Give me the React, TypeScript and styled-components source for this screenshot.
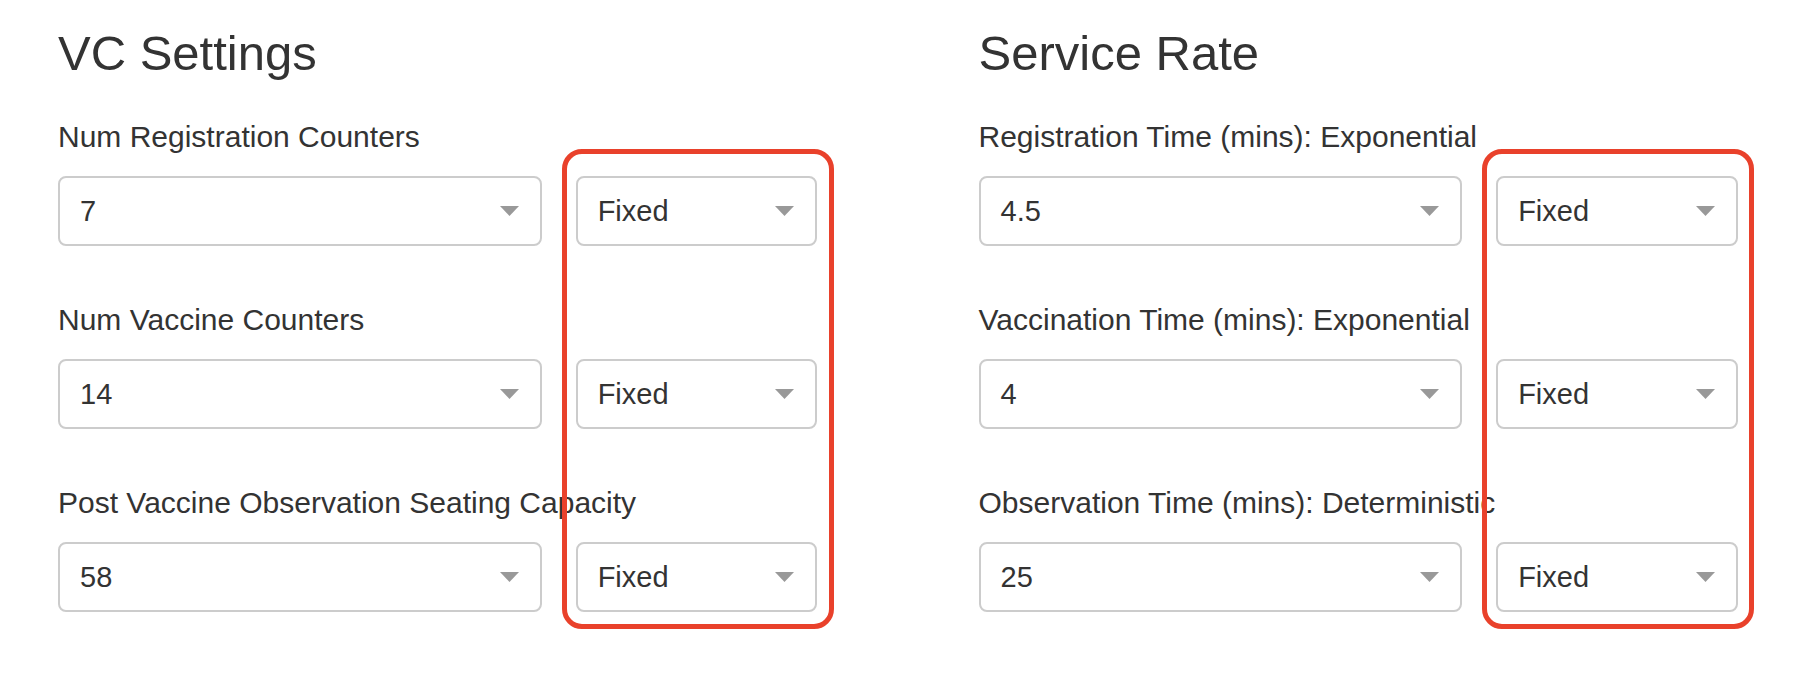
import * as React from "react";
import styled, { createGlobalStyle } from "styled-components";

const GlobalStyle = createGlobalStyle`
    html, body {
        margin: 0;
        padding: 0;
        background: #fff;
    }
    * {
        box-sizing: border-box;
    }
    body {
        font-family: "Liberation Sans", Arial, sans-serif;
        color: #333;
    }
`

const Page = styled.div`
    display: grid;
    grid-template-columns: 1fr 1fr;
    column-gap: 161px;
    padding: 0 58px;
    width: 1796px;
    height: 676px;
`

const Column = styled.section`
    display: flex;
    flex-direction: column;
`

const Heading = styled.h3`
    margin: 27px 0 0;
    font-size: 49px;
    line-height: 52px;
    font-weight: 500;
    color: #333;
`

const Fields = styled.div`
    position: relative;
    display: flex;
    flex-direction: column;
    gap: 56px;
    margin-top: 40px;
`

const Field = styled.div`
    display: flex;
    flex-direction: column;
`

const Label = styled.label`
    display: block;
    font-size: 30px;
    line-height: 35px;
    margin-bottom: 22px;
    color: #333;
    white-space: nowrap;
`

const SelectRow = styled.div`
    display: grid;
    grid-template-columns: 2fr 1fr;
    column-gap: 34px;
`

const SelectBox = styled.div`
    display: flex;
    align-items: center;
    justify-content: space-between;
    height: 70px;
    padding: 0 21px 0 20px;
    border: 2px solid #ccc;
    border-radius: 8px;
    background: #fff;
    font-size: 29px;
    color: #333;
`

const Highlight = styled.div`
    position: absolute;
    top: 30px;
    bottom: -17px;
    right: -16px;
    width: 272px;
    border: 5px solid #e9412b;
    border-radius: 20px;
    pointer-events: none;
`

const Caret = () => (
    <svg width="19" height="10" viewBox="0 0 19 10">
        <polygon points="0,0 19,0 9.5,10" fill="#999" />
    </svg>
)

const Select = ({ value }: { value: string }) => (
    <SelectBox>
        <span>{value}</span>
        <Caret />
    </SelectBox>
)

type Item = { label: string; value: string };

const Panel = ({ title, items }: { title: string; items: Item[] }) => (
    <Column>
        <Heading>{title}</Heading>
        <Fields>
            {items.map((item) => (
                <Field key={item.label}>
                    <Label>{item.label}</Label>
                    <SelectRow>
                        <Select value={item.value} />
                        <Select value="Fixed" />
                    </SelectRow>
                </Field>
            ))}
            <Highlight />
        </Fields>
    </Column>
)

const vcSettings: Item[] = [
    { label: "Num Registration Counters", value: "7" },
    { label: "Num Vaccine Counters", value: "14" },
    { label: "Post Vaccine Observation Seating Capacity", value: "58" },
]

const serviceRate: Item[] = [
    { label: "Registration Time (mins): Exponential", value: "4.5" },
    { label: "Vaccination Time (mins): Exponential", value: "4" },
    { label: "Observation Time (mins): Deterministic", value: "25" },
]

export default function App() {
    return (
        <>
            <GlobalStyle />
            <Page>
                <Panel title="VC Settings" items={vcSettings} />
                <Panel title="Service Rate" items={serviceRate} />
            </Page>
        </>
    )
}
